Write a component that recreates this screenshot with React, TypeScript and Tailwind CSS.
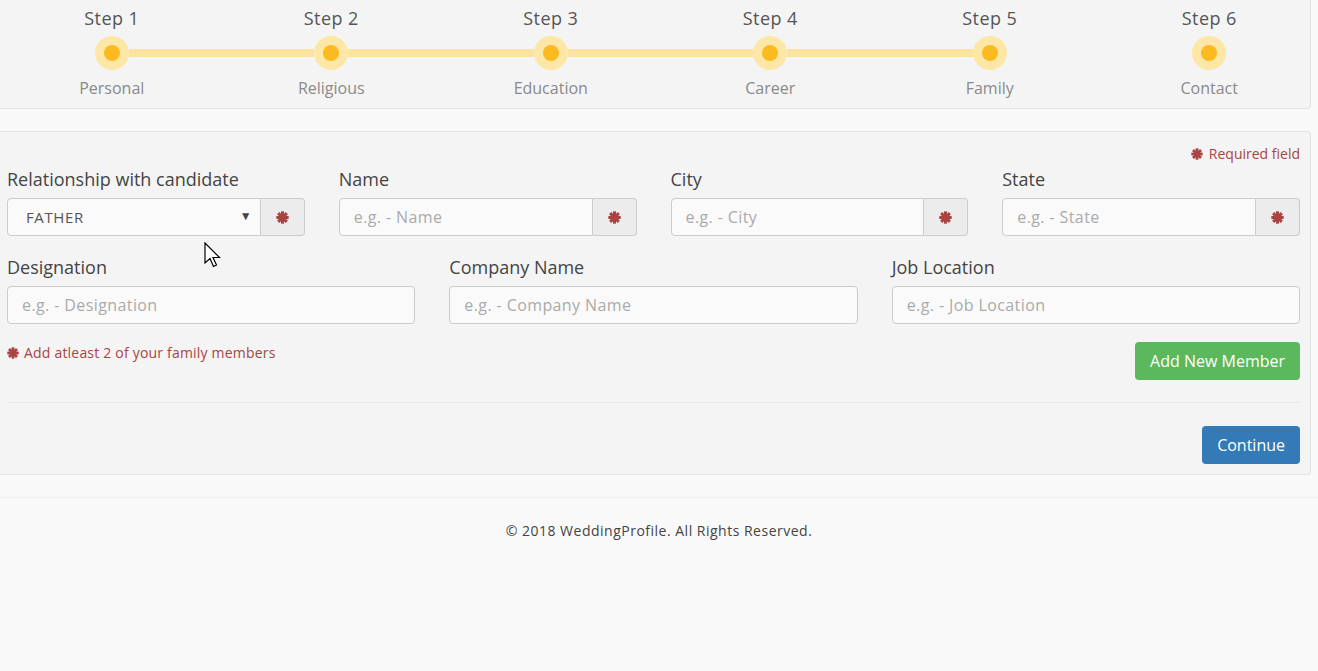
import { useState } from "react";

const steps = [
  { n: 1, label: "Personal" },
  { n: 2, label: "Religious" },
  { n: 3, label: "Education" },
  { n: 4, label: "Career" },
  { n: 5, label: "Family" },
  { n: 6, label: "Contact" },
];

function Asterisk({ className = "" }: { className?: string }) {
  return (
    <svg viewBox="0 0 12 12" className={className} fill="none" stroke="currentColor" strokeWidth="2.8" strokeLinecap="butt">
      <line x1="6" y1="0.3" x2="6" y2="11.7" />
      <line x1="0.3" y1="6" x2="11.7" y2="6" />
      <line x1="2" y1="2" x2="10" y2="10" />
      <line x1="10" y1="2" x2="2" y2="10" />
    </svg>
  );
}

function Stepper() {
  return (
    <div className="mr-[7px] h-[109px] border-r border-b border-[#e2e2e2] rounded-br bg-[#f4f4f4]">
      <div className="grid grid-cols-[repeat(6,219.5px)] pl-[2px] pt-[7px]">
        {steps.map((s, i) => (
          <div key={s.n} className="flex flex-col items-center">
            <div className="text-[18px] leading-[22px] tracking-[0.4px] text-[#555]">Step {s.n}</div>
            <div className="mt-[7px] flex w-full items-center">
              <div className={`h-[8px] flex-1 ${i > 0 && i < 5 ? "bg-[#fbe3a0]" : ""}`} />
              <div className="flex h-[34px] w-[34px] items-center justify-center rounded-full bg-[#fde7a6]">
                <div className="h-[16px] w-[16px] rounded-full bg-[#fbba1f]" />
              </div>
              <div className={`h-[8px] flex-1 ${i < 4 ? "bg-[#fbe3a0]" : ""}`} />
            </div>
            <div className="mt-[8px] text-[16px] leading-[20px] text-[#8a8a8a]">{s.label}</div>
          </div>
        ))}
      </div>
    </div>
  );
}

function Field({ label, placeholder, addon = true }: { label: string; placeholder: string; addon?: boolean }) {
  return (
    <div>
      <div className="h-[30px] text-[18px] leading-[22px] text-[#444]">{label}</div>
      <div className="flex h-[38px]">
        <input
          placeholder={placeholder}
          className={`min-w-0 flex-1 border border-[#ccc] bg-[#fafafa] px-[14px] text-[16px] tracking-[0.4px] text-[#555] placeholder:text-[#aaa] outline-none ${addon ? "rounded-l" : "rounded"}`}
        />
        {addon && (
          <div className="flex w-[44px] items-center justify-center rounded-r border border-l-0 border-[#ccc] bg-[#ececec] text-[#a94442]">
            <Asterisk className="h-[13px] w-[13px]" />
          </div>
        )}
      </div>
    </div>
  );
}

export default function App() {
  const [relation, setRelation] = useState("FATHER");

  return (
    <div className="min-h-screen bg-[#f9f9f9] font-['Open_Sans',sans-serif]">
      <Stepper />

      <div className="relative mt-[22px] mr-[7px] border border-l-0 border-[#e2e2e2] rounded-r bg-[#f4f4f4] pl-[7px] pr-[10px] pt-[13px] pb-[10px]">
        <div className="flex items-center justify-end gap-[6px] text-[14px] leading-[18px] text-[#a94442]">
          <Asterisk className="h-[12px] w-[12px]" />
          Required field
        </div>

        <div className="mt-[5px] grid grid-cols-4 gap-x-[34px]">
          <div>
            <div className="h-[30px] text-[18px] leading-[22px] text-[#444]">Relationship with candidate</div>
            <div className="flex h-[38px]">
              <div className="relative flex-1">
                <select
                  value={relation}
                  onChange={(e) => setRelation(e.target.value)}
                  className="h-full w-full appearance-none rounded-l border border-[#ccc] bg-[#fafafa] pl-[18px] text-[15px] tracking-[0.6px] text-[#555] outline-none"
                >
                  <option>FATHER</option>
                  <option>MOTHER</option>
                  <option>BROTHER</option>
                  <option>SISTER</option>
                </select>
                <span className="pointer-events-none absolute right-[9px] top-[9px] text-[12px] text-[#444]">▼</span>
              </div>
              <div className="flex w-[44px] items-center justify-center rounded-r border border-l-0 border-[#ccc] bg-[#ececec] text-[#a94442]">
                <Asterisk className="h-[13px] w-[13px]" />
              </div>
            </div>
          </div>
          <Field label="Name" placeholder="e.g. - Name" />
          <Field label="City" placeholder="e.g. - City" />
          <Field label="State" placeholder="e.g. - State" />
        </div>

        <div className="mt-[20px] grid grid-cols-3 gap-x-[34px]">
          <Field label="Designation" placeholder="e.g. - Designation" addon={false} />
          <Field label="Company Name" placeholder="e.g. - Company Name" addon={false} />
          <Field label="Job Location" placeholder="e.g. - Job Location" addon={false} />
        </div>

        <div className="mt-[18px] flex items-start justify-between">
          <div className="mt-[2px] flex items-center gap-[5px] text-[14px] leading-[18px] tracking-[0.2px] text-[#a94442]">
            <Asterisk className="h-[12px] w-[12px]" />
            Add atleast 2 of your family members
          </div>
          <button className="h-[38px] rounded bg-[#5cb85c] px-[15px] text-[16px] text-white">Add New Member</button>
        </div>

        <div className="mt-[22px] border-t border-[#e8e8e8]" />

        <div className="mt-[23px] flex justify-end">
          <button className="h-[38px] rounded bg-[#337ab7] px-[15px] text-[16px] text-white">Continue</button>
        </div>

        <svg className="absolute left-[204px] top-[110px] h-[28px] w-[20px]" viewBox="0 0 20 28">
          <path d="M1 1 L1 21 L6 16.5 L9.5 24.5 L12.5 23 L9 15.5 L15.5 15.5 Z" fill="white" stroke="black" strokeWidth="1.2" strokeLinejoin="miter" />
        </svg>
      </div>

      <div className="mt-[22px] border-t border-[#efefef] pt-[24px] text-center text-[14px] leading-[18px] tracking-[0.5px] text-[#444]">
        © 2018 WeddingProfile. All Rights Reserved.
      </div>
    </div>
  );
}
